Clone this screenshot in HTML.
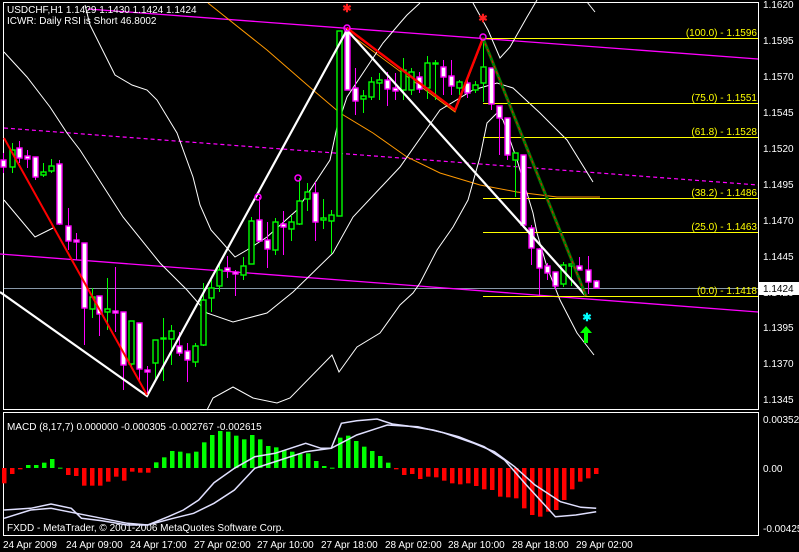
<!DOCTYPE html>
<html><head><meta charset="utf-8"><style>
html,body{margin:0;padding:0;background:#000;}
svg{display:block;font-family:"Liberation Sans",sans-serif;}
</style></head><body>
<svg id="s" width="799" height="552" viewBox="0 0 799 552" xmlns="http://www.w3.org/2000/svg">
<rect width="799" height="552" fill="#000"/>
<g fill="none" shape-rendering="crispEdges">
<rect x="3.5" y="2.5" width="755" height="407" stroke="#fff"/>
<rect x="3.5" y="412.5" width="755" height="123" stroke="#fff"/>
</g>
<line x1="4" y1="288.5" x2="758" y2="288.5" stroke="#8898a8"/>
<polyline points="88,9 758,59" stroke="#ff00ff" stroke-width="1.3" fill="none"/>
<polyline points="0,254 758,312" stroke="#ff00ff" stroke-width="1.3" fill="none"/>
<polyline points="4,128 758,185" stroke="#ff00ff" stroke-width="1.2" stroke-dasharray="4,3" fill="none"/>
<polyline points="208,3 267,50 313,90 340,113 373,133 407,157 440,173 480,185 517,192 557,197 600,197" stroke="#ff9900" fill="none"/>
<polyline points="347,32 455,112 483,40" stroke="#ff9900" fill="none"/>
<g stroke="#fff" fill="none" stroke-width="1">
<polyline points="85,5 90,25 115,75 132,85 147,90 157,100 177,133 193,177 200,205 211,230 220,240 235,257 247,250 267,237 297,210 330,160 337,127 347,97 367,67 383,43 400,23 407,15 420,3"/>
<polyline points="4,52 27,77 50,107 67,133 80,150 123,217 160,263 187,290 207,313 233,322 267,313 293,292 333,253 353,217 400,167 440,110 473,90 497,83 513,88 540,113 567,140 593,182"/>
<polyline points="4,200 35,237 53,228"/>
<polyline points="207,410 213,398 233,387 253,398 277,403 290,398 332,355 339,372 357,347 380,333 400,305 413,293 420,283 437,250 453,227 468,200 480,157 487,123 497,113 503,120 517,160 533,213 537,233 547,267 560,300 577,333 594,355"/>
<polyline points="473,3 488,30 500,58 510,47 527,17 537,0"/>
<polyline points="587,2 595,12"/>
</g>
<g stroke="#ffff00" stroke-width="1" shape-rendering="crispEdges">
<line x1="483" y1="38.5" x2="758" y2="38.5"/>
<line x1="483" y1="103.5" x2="758" y2="103.5"/>
<line x1="483" y1="137.5" x2="758" y2="137.5"/>
<line x1="483" y1="198.5" x2="758" y2="198.5"/>
<line x1="483" y1="232.5" x2="758" y2="232.5"/>
<line x1="483" y1="296.5" x2="758" y2="296.5"/>
</g>
<g fill="#ffff00" font-size="10" text-anchor="end">
<text x="757" y="36">(100.0) - 1.1596</text>
<text x="757" y="101">(75.0) - 1.1551</text>
<text x="757" y="135">(61.8) - 1.1528</text>
<text x="757" y="196">(38.2) - 1.1486</text>
<text x="757" y="230">(25.0) - 1.1463</text>
<text x="757" y="294">(0.0) - 1.1418</text>
</g>
<g id="candles"></g>
<polyline points="0,292 147,396 347,30 586,296" stroke="#fff" stroke-width="2.2" fill="none"/>
<polyline points="4,138 147,395" stroke="#ff0000" stroke-width="2" fill="none"/>
<polyline points="347,28 455,110 483,38" stroke="#ff0000" stroke-width="2.4" fill="none"/>
<polyline points="483,38 586,296" stroke="#008000" stroke-width="3" fill="none"/>
<polyline points="483,38 586,296" stroke="#ff0000" stroke-width="1" stroke-dasharray="3,3" fill="none"/>
<g stroke="#ff00ff" stroke-width="1.5" fill="none">
<circle cx="347" cy="28" r="3"/><circle cx="483" cy="37" r="3"/>
<circle cx="298" cy="178" r="3"/><circle cx="258" cy="197" r="3"/>
</g>
<g fill="#ff2020" font-size="11" font-weight="bold" text-anchor="middle">
<text x="347" y="12">✱</text><text x="483" y="22">✱</text>
</g>
<text x="587" y="321" fill="#00ffff" font-size="11" font-weight="bold" text-anchor="middle">✱</text>
<path d="M586,326 L580,333 L584,333 L584,343 L588,343 L588,333 L592,333 Z" fill="#00ff00"/>
<g fill="#fff" font-size="10">
<text x="7" y="13">USDCHF,H1  1.1429 1.1430 1.1424 1.1424</text>
<text x="7" y="24">ICWR: Daily RSI is Short 46.8002</text>
<text x="7" y="430">MACD  (8,17,7) 0.000000 -0.000305 -0.002767 -0.002615</text>
<text x="7" y="531">FXDD - MetaTrader, © 2001-2006 MetaQuotes Software Corp.</text>
</g>
<g fill="#fff" font-size="10">
<text x="763" y="8">1.1620</text><text x="763" y="44">1.1595</text><text x="763" y="80">1.1570</text>
<text x="763" y="116">1.1545</text><text x="763" y="152">1.1520</text><text x="763" y="188">1.1495</text>
<text x="763" y="224">1.1470</text><text x="763" y="260">1.1445</text><text x="763" y="296">1.1420</text>
<text x="763" y="331">1.1395</text><text x="763" y="367">1.1370</text><text x="763" y="403">1.1345</text>
<text x="763" y="423">0.003521</text><text x="763" y="472">0.00</text><text x="763" y="532">-0.00425</text>
</g>
<rect x="759" y="282" width="40" height="13" fill="#fff"/>
<text x="763" y="292" fill="#000" font-size="10">1.1424</text>
<g fill="#fff" font-size="10">
<text x="3" y="548">24 Apr 2009</text><text x="66" y="548">24 Apr 09:00</text><text x="130" y="548">24 Apr 17:00</text>
<text x="194" y="548">27 Apr 02:00</text><text x="257" y="548">27 Apr 10:00</text><text x="321" y="548">27 Apr 18:00</text>
<text x="385" y="548">28 Apr 02:00</text><text x="448" y="548">28 Apr 10:00</text><text x="512" y="548">28 Apr 18:00</text>
<text x="576" y="548">29 Apr 02:00</text>
</g>
<g id="macd"></g>
<g stroke="#e0e0ff" stroke-width="1.5" fill="none" id="ml"></g>
</svg>
<script>
var NS="http://www.w3.org/2000/svg";
function el(p,t,a){var e=document.createElementNS(NS,t);for(var k in a)e.setAttribute(k,a[k]);p.appendChild(e);return e;}
var C=[[3,160,167,153,173],[12,167,150,143,173],[19,148,158,141,163],[27,156,159,150,168],[35,157,177,157,180],[43,175,172,163,177],[51,171,166,159,173],[59,164,224,160,225],[68,226,241,208,250],[76,240,242,233,260],[84,243,308,243,345],[92,309,297,288,318],[99,296,314,296,336],[107,312,309,278,330],[115,311,313,267,332],[123,312,365,312,390],[131,364,321,321,366],[139,323,369,323,382],[147,370,372,366,396],[155,363,340,340,381],[163,339,338,318,381],[171,339,331,325,365],[179,346,353,332,356],[187,351,360,343,382],[195,362,346,343,367],[203,345,300,283,346],[211,298,288,280,312],[219,286,270,265,292],[227,268,271,256,278],[235,272,274,270,296],[243,275,266,257,280],[251,264,221,217,264],[259,220,241,197,242],[267,240,249,222,268],[275,250,222,218,255],[283,224,227,211,255],[291,229,222,215,241],[299,224,201,178,225],[307,199,192,183,211],[315,193,222,182,241],[323,220,218,199,229],[331,221,215,210,254],[339,216,31,31,216],[347,30,90,27,90],[355,88,101,68,115],[363,99,96,90,113],[371,97,82,77,100],[379,83,80,73,100],[387,80,89,72,106],[395,88,91,73,100],[403,90,70,58,100],[411,90,72,68,95],[419,77,89,72,93],[427,88,63,56,99],[435,64,63,60,100],[443,67,77,60,95],[451,76,86,60,95],[459,88,82,80,95],[467,83,93,80,98],[475,90,85,81,93],[483,83,67,38,102],[491,68,104,68,110],[499,106,118,106,155],[507,118,155,118,160],[515,160,153,153,197],[523,155,225,155,228],[531,228,248,225,265],[539,249,268,248,296],[547,266,273,263,280],[555,272,286,272,290],[563,284,265,262,287],[571,266,264,258,286],[579,266,270,257,270],[588,270,282,256,294],[596,281,288,280,289]];
var g=document.getElementById("candles");
C.forEach(function(c){var x=c[0],o=c[1],cl=c[2],bull=cl<o;var col=bull?"#00ff00":"#ff00ff";
el(g,"line",{x1:x+.5,x2:x+.5,y1:c[3],y2:c[4],stroke:col,"stroke-width":1});
var t=Math.min(o,cl),h=Math.max(1,Math.abs(o-cl));
el(g,"rect",{x:x-2,y:t,width:5,height:h,fill:bull?"#000":"#fff",stroke:col,"stroke-width":1.4});});
var H=[250,222,208,195,195,188,177,203,225,228,257,257,257,245,230,242,215,218,218,187,172,153,155,160,155,127,105,93,95,107,118,105,118,138,142,150,155,162,160,183,198,203,113,107,123,140,153,168,188,208,225,222,237,230,232,242,250,253,250,258,268,270,290,292,295,325,345,350,335,330,300,268,245,235,222];
var m=document.getElementById("macd");var z=468;
H.forEach(function(Y,i){var y=400+Y/3;var x=2+i*8;var gr=y<z;
el(m,"rect",{x:x,y:Math.min(y,z),width:4.5,height:Math.max(1,Math.abs(y-z)),fill:gr?"#00ff00":"#ff0000"});});
function pl(a){return a.map(function(p){return (p[0]/1.9625).toFixed(1)+","+(400+p[1]/3).toFixed(1);}).join(" ");}
var L1=[[8,330],[60,325],[100,312],[140,325],[160,355],[200,362],[250,375],[290,375],[330,350],[360,330],[390,300],[420,248],[460,205],[500,170],[540,160],[600,130],[630,145],[650,145],[670,70],[700,62],[740,57],[770,72],[800,78],[850,90],[900,110],[950,140],[990,180],[1030,250],[1060,300],[1090,350],[1130,345],[1170,335]];
var L2=[[8,355],[60,330],[100,325],[150,340],[200,355],[250,370],[290,375],[340,355],[380,340],[420,310],[460,270],[500,205],[550,180],[600,155],[650,145],[700,105],[760,75],[820,80],[870,98],[930,130],[970,155],[1010,200],[1050,255],[1100,305],[1140,322],[1170,325]];
var ml=document.getElementById("ml");
el(ml,"polyline",{points:pl(L1)});el(ml,"polyline",{points:pl(L2)});
</script>
</body></html>
